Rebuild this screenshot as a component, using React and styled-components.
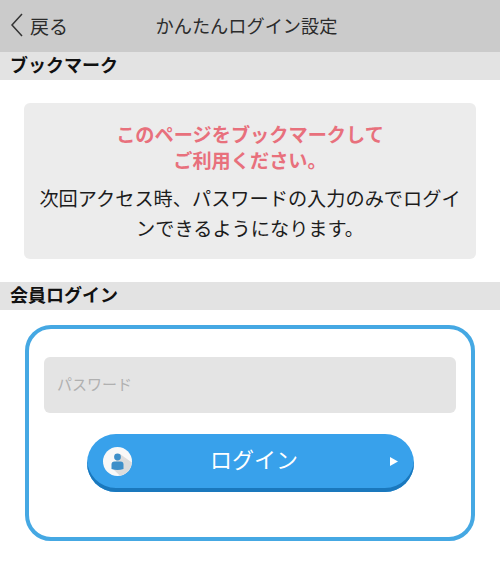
import React from "react";
import styled, { createGlobalStyle } from "styled-components";

const Global = createGlobalStyle`
  html, body { margin: 0; padding: 0; background: #fff; }
  body { font-family: "Liberation Sans", "Noto Sans CJK JP", sans-serif; }
  * { box-sizing: border-box; }
`;

const Page = styled.div`
  width: 500px;
  height: 579px;
  overflow: hidden;
  background: #fff;
`;

const NavBar = styled.header`
  height: 52px;
  background: #cbcbcb;
  color: #2b2b2b;
  display: grid;
  grid-template-columns: 1fr auto 1fr;
  align-items: center;
  padding: 0 10px 2px;
`;

const BackLink = styled.a`
  display: flex;
  align-items: center;
  gap: 7px;
  font-size: 19px;
  color: #2b2b2b;
`;

const NavTitle = styled.h1`
  margin: 0 7px 0 0;
  font-size: 18.2px;
  font-weight: 400;
`;

const SectionHead = styled.h2`
  margin: 0;
  height: 28px;
  background: #e3e3e3;
  padding: 0 10px;
  font-size: 18px;
  line-height: 29px;
  font-weight: 700;
  color: #111;
`;

const NoticeWrap = styled.section`
  padding: 23px 24px;
`;

const Notice = styled.div`
  background: #ececec;
  border-radius: 6px;
  height: 156px;
  padding: 20px 12px 0;
  text-align: center;
`;

const NoticeHead = styled.p`
  margin: 0 0 10px;
  font-size: 19.2px;
  line-height: 26px;
  font-weight: 700;
  color: #e8707c;
`;

const NoticeBody = styled.p`
  margin: 0;
  font-size: 19.2px;
  line-height: 30px;
  color: #1c1c1c;
`;

const LoginWrap = styled.section`
  padding: 15px 25px 0;
`;

const LoginCard = styled.form`
  height: 216px;
  border: 4px solid #45a8e3;
  border-radius: 26px;
  padding: 28px 15px 0;
  display: flex;
  flex-direction: column;
  align-items: center;
`;

const PasswordInput = styled.input`
  width: 100%;
  height: 56px;
  flex: none;
  border: 0;
  border-radius: 6px;
  background: #e4e4e4;
  padding: 0 13px 2px;
  font: inherit;
  font-size: 15px;
  outline: none;
  &::placeholder { color: #b0b0b0; opacity: 1; }
`;

const LoginButton = styled.button`
  margin-top: 21px;
  width: 327px;
  height: 58px;
  flex: none;
  border: 0;
  border-radius: 29px;
  background: #38a1eb;
  box-shadow: inset 0 -4px 0 #1a78bd;
  color: #fff;
  font: inherit;
  font-size: 22px;
  padding: 0 16px 4px 16px;
  display: grid;
  grid-template-columns: 29px 1fr 8px;
  align-items: center;
`;

const ButtonLabel = styled.span`
  text-align: center;
  padding-right: 13px;
  padding-bottom: 6px;
`;

const BackIcon = () => (
  <svg width="13" height="24" viewBox="0 0 13 24" fill="none" stroke="#333" strokeWidth="1.5">
    <path d="M12 1 L2 12 L12 23" />
  </svg>
);

const UserIcon = () => (
  <svg width="29" height="29" viewBox="0 0 29 29">
    <circle cx="14.5" cy="14.5" r="14.5" fill="#f8f8f8" />
    <path d="M17 7 L28.9 15.5 A14.5 14.5 0 0 1 17 28.8 L9 21 Z" fill="#dcdcdc" />
    <circle cx="14.5" cy="10" r="3.4" fill="#3d8fc9" />
    <path d="M8.5 22 V17.5 Q8.5 14.5 11.5 14.5 H17.5 Q20.5 14.5 20.5 17.5 V22 Q14.5 24 8.5 22 Z" fill="#3d8fc9" />
  </svg>
);

const ArrowIcon = () => (
  <svg width="8" height="9" viewBox="0 0 8 9">
    <path d="M0 0 L8 4.5 L0 9 Z" fill="#fff" />
  </svg>
);

export default function App() {
  return (
    <Page>
      <Global />
      <NavBar>
        <BackLink><BackIcon />戻る</BackLink>
        <NavTitle>かんたんログイン設定</NavTitle>
      </NavBar>
      <SectionHead>ブックマーク</SectionHead>
      <NoticeWrap>
        <Notice>
          <NoticeHead>このページをブックマークして<br />ご利用ください。</NoticeHead>
          <NoticeBody>次回アクセス時、パスワードの入力のみでログインできるようになります。</NoticeBody>
        </Notice>
      </NoticeWrap>
      <SectionHead>会員ログイン</SectionHead>
      <LoginWrap>
        <LoginCard onSubmit={(e) => e.preventDefault()}>
          <PasswordInput type="password" placeholder="パスワード" />
          <LoginButton type="submit">
            <UserIcon />
            <ButtonLabel>ログイン</ButtonLabel>
            <ArrowIcon />
          </LoginButton>
        </LoginCard>
      </LoginWrap>
    </Page>
  );
}
